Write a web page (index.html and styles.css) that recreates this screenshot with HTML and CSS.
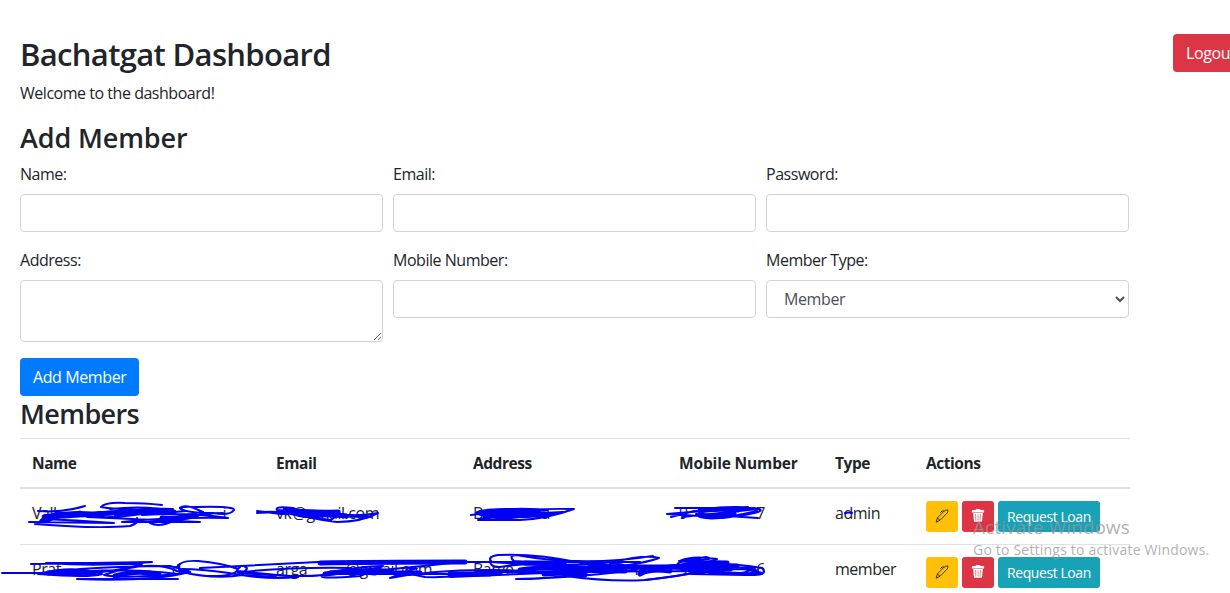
FILE: index.html
```html
<!DOCTYPE html>
<html lang="en">
<head>
<meta charset="utf-8">
<title>Bachatgat Dashboard</title>
<link rel="stylesheet" href="styles.css">
</head>
<body>
<svg class="sprite" aria-hidden="true">
  <symbol id="pencil" viewBox="0 0 16 16"><path d="M1.300 15 2.800 10.200 10.500 2.300Q12 .8 14.800 1.200 15 3.500 13.500 5L5.800 12.900ZM2.800 10.200 5.800 12.900M10.500 2.300H8L6 4.300" fill="none" stroke="currentColor" stroke-width="1" stroke-linejoin="round"/></symbol>
  <symbol id="trash" viewBox="0 0 14 16"><path fill="currentColor" fill-rule="evenodd" d="M5 0h4l1 1h3q1 0 1 1v2H0V2q0-1 1-1h3zM1.500 4.500h11l-.8 9q-.1 1-1.200 1h-7q-1.100 0-1.200-1zM4 6l.3 7h.7l-.3-7zm2.700 0v7h.7V6zm2.600 0-.3 7h.7l.3-7z"/></symbol>
</svg>
<main class="page">
  <header class="top">
    <div>
      <h1 class="title">Bachatgat Dashboard</h1>
      <p class="welcome">Welcome to the dashboard!</p>
    </div>
    <button class="btn danger logout">Logout</button>
  </header>
  <h2 class="heading add-heading">Add Member</h2>
  <form class="form">
    <div class="grid">
      <div class="field"><label class="label">Name:</label><input class="control"></div>
      <div class="field"><label class="label">Email:</label><input class="control"></div>
      <div class="field"><label class="label">Password:</label><input class="control" type="password"></div>
      <div class="field"><label class="label">Address:</label><textarea class="control area"></textarea></div>
      <div class="field"><label class="label">Mobile Number:</label><input class="control"></div>
      <div class="field"><label class="label">Member Type:</label><select class="control select"><option>Member</option></select></div>
    </div>
    <button class="btn primary" type="button">Add Member</button>
  </form>
  <h2 class="heading members-heading">Members</h2>
  <table class="table">
    <colgroup><col class="c-name"><col class="c-email"><col class="c-address"><col class="c-mobile"><col class="c-type"><col></colgroup>
    <thead><tr><th>Name</th><th>Email</th><th>Address</th><th class="wide">Mobile Number</th><th>Type</th><th>Actions</th></tr></thead>
    <tbody>
      <tr>
        <td><div class="ends w-name"><span>Vall</span><span>i</span></div></td>
        <td><div class="ends w-mail"><span>vk</span><span>@gmail.com</span></div></td>
        <td><div class="ends w-addr"><span>B</span><span>a</span></div></td>
        <td><div class="ends w-phone"><span>9</span><span>7</span></div></td>
        <td>admin</td>
        <td><div class="actions"><button class="btn sm warning"><svg class="icon"><use href="#pencil"/></svg></button><button class="btn sm danger"><svg class="icon"><use href="#trash"/></svg></button><button class="btn sm info">Request Loan</button></div></td>
      </tr>
      <tr>
        <td><div class="ends w-name2"><span>Prat</span><span>d</span></div></td>
        <td><div class="ends w-mail2"><span>arga</span><span>@gmail.com</span></div></td>
        <td><div class="ends w-addr2"><span>Barve</span><span>i</span></div></td>
        <td><div class="ends w-phone"><span>9</span><span>6</span></div></td>
        <td>member</td>
        <td><div class="actions"><button class="btn sm warning"><svg class="icon"><use href="#pencil"/></svg></button><button class="btn sm danger"><svg class="icon"><use href="#trash"/></svg></button><button class="btn sm info">Request Loan</button></div></td>
      </tr>
    </tbody>
  </table>
</main>
<svg class="ink" viewBox="0 0 1230 593" aria-hidden="true">
  <!-- first row -->
  <path d="M38 511Q62 513 85 506M29 522L114 523Q75 520 42 519Q32 527 70 514Q100 507 42 520Q60 518 100 512L48 518Q80 518 120 511M35 524Q95 529 130 526Q141 522 137 518M163 510Q115 510 101 507Q105 502 125 503Q145 503 162 505M110 509Q145 505 175 511L60 516Q150 507 173 509Q120 519 87 517L200 522H122Q170 517 228 518Q190 512 142 515L186 511Q170 506 196 507Q235 506 234 510Q230 516 213 513Q185 513 180 508Q185 503 203 512Q200 518 175 520Q160 528 150 523M184 518Q206 513 223 513"/>
  <path class="heavy" d="M45 517Q75 511 103 515M57 514Q80 516 112 513M116 514Q152 510 174 512M162 518Q180 519 195 515"/>
  <path d="M257 511L281 514Q307 513 293 508Q274 506 277 510L340 515L304 517Q275 509 257 513Q275 512 318 511Q342 513 331 520Q306 517 295 510L335 512Q348 518 378 513Q361 522 337 522Q310 519 288 511Q310 514 335 517Q350 513 371 517L303 516"/>
  <path class="heavy" d="M285 510Q310 513 338 512M310 515Q330 513 346 516"/>
  <path d="M471 515Q520 508 574 509Q546 519 520 520L478 520Q480 516 551 515Q489 521 476 513Q480 507 548 510Q478 517 484 517Q512 514 563 512Q495 521 480 519"/>
  <path class="heavy" d="M480 513Q515 509 538 511M485 515Q510 517 540 514"/>
  <path d="M675 508H715Q753 505 757 511Q715 521 700 516L667 514Q700 511 754 508Q775 511 730 517Q700 521 696 514L758 518M671 517L694 511Q727 510 748 507M682 517L758 509"/>
  <path class="heavy" d="M700 511Q714 508 738 510M700 515Q714 518 734 514"/>
  <path d="M845 513Q849 512 852 513"/>
  <!-- second row -->
  <path d="M2 573H42Q73 565 102 574Q90 578 38 574L80 569Q123 566 170 566Q192 572 190 572Q150 582 77 579H178M31 564L152 562Q100 567 46 563L142 564Q114 573 60 575Q107 566 178 574Q120 579 104 575Q151 559 177 571Q215 580 242 575L276 577M178 567Q180 560 198 561Q222 563 238 569Q235 577 206 576Q175 573 178 565M240 567Q233 573 242 573Q250 568 245 567M182 569Q200 569 229 573Q265 580 298 577Q257 573 237 571M200 568L318 562H640M242 572Q290 567 351 568"/>
  <path class="heavy" d="M48 573Q74 571 94 573M115 576Q140 569 159 575M320 563Q365 562 465 562M325 574Q350 570 375 573"/>
  <path d="M318 562H460Q390 570 330 574H500M240 573Q318 579 330 573Q360 566 383 566L360 576Q310 580 325 574Q380 566 425 577Q456 578 478 572L720 571M450 577L570 572Q637 566 659 558Q646 554 613 562Q570 568 492 562Q486 557 498 555Q535 553 582 563L603 562Q535 563 514 561Q508 556 516 555Q582 567 653 556M491 557Q487 567 500 567Q540 560 600 570Q550 580 516 579Q590 577 638 569Q610 560 609 566L565 576Q610 582 645 580Q681 576 697 572L670 567M410 575Q400 567 417 568L390 578Q460 565 554 573"/>
  <path class="heavy" d="M330 573Q380 568 395 573L420 573M450 574H490M525 563H564M520 570Q545 566 608 569M546 568Q590 571 625 571M544 574Q565 572 585 575M590 566Q640 568 711 566M640 574Q650 568 670 571"/>
  <path d="M640 570Q705 558 762 568Q770 576 745 575L691 574Q750 566 758 571Q735 580 680 566Q668 563 706 557Q720 560 680 561Q691 555 717 559Q700 567 660 566L755 568Q740 577 717 571M679 561Q728 565 763 573Q720 574 690 568M645 580Q680 576 704 571"/>
  <path class="heavy" d="M685 565Q700 562 727 563M670 567Q700 568 737 566M690 570Q715 567 730 569"/>
</svg>
<aside class="watermark"><div class="wm-title">Activate Windows</div><div class="wm-text">Go to Settings to activate Windows.</div></aside>
</body>
</html>
```

FILE: styles.css
```css
* { box-sizing: border-box; }
body { margin: 0; width: 1230px; height: 593px; overflow: hidden; position: relative; background: #fff; color: #212529; font: 400 16px/24px "Open Sans", "Noto Sans", sans-serif; letter-spacing: -.47px; }
.sprite { display: none; }
.page { padding: 35px 0 0 20px; width: 1250px; }
.top { display: flex; justify-content: space-between; align-items: flex-start; }
.title { margin: 0 0 8px; font-size: 31px; line-height: 38px; font-weight: 600; letter-spacing: -.67px; }
.welcome { margin: 0 0 16px; }
.logout { margin-top: -1px; width: 77px; }
.heading { margin: 0 0 8px; font-size: 27px; line-height: 33px; font-weight: 600; letter-spacing: -.6px; }
.add-heading { letter-spacing: -.12px; }
.form { width: 1109px; }
.grid { display: grid; grid-template-columns: repeat(3, 363px); column-gap: 10px; row-gap: 16px; margin-bottom: 16px; }
.field { display: flex; flex-direction: column; }
.label { margin-bottom: 8px; }
.control { display: block; width: 100%; height: 38px; margin: 0; padding: 6px 12px; border: 1px solid #ced4da; border-radius: 4px; background: #fff; color: #495057; font: inherit; letter-spacing: inherit; }
.area { height: 62px; resize: vertical; }
.select { padding-left: 13px; letter-spacing: -.4px; }
.btn { display: block; height: 38px; padding: 6px 12px; border: 1px solid transparent; border-radius: 4px; color: #fff; font: inherit; letter-spacing: -.4px; text-align: left; white-space: nowrap; }
.primary { background: #007bff; width: 119px; }
.danger { background: #dc3545; }
.warning { background: #ffc107; color: #212529; }
.info { background: #17a2b8; width: 102px; }
.members-heading { line-height: 36px; margin-bottom: 6px; }
.table { width: 1110px; table-layout: fixed; border-collapse: separate; border-spacing: 0; }
.c-name { width: 244px; }
.c-email { width: 197px; }
.c-address { width: 206px; }
.c-mobile { width: 156px; }
.c-type { width: 91px; }
.table th { padding: 13px 12px 12px; border-top: 1px solid #dee2e6; border-bottom: 2px solid #dee2e6; text-align: left; font-size: 15.5px; font-weight: 700; height: 51px; line-height: 23px; letter-spacing: -.45px; }
.table .wide { letter-spacing: -.15px; }
.table td { padding: 12px; vertical-align: top; height: 55px; }
.table tr + tr td { border-top: 1px solid #dee2e6; }
.actions { display: flex; gap: 4px; }
.btn.sm { height: 31px; padding: 4px 8px; border-radius: 3px; font-size: 14px; line-height: 21px; min-width: 32px; letter-spacing: -.42px; }
.icon { display: block; width: 14px; height: 14px; margin-top: -1px; }
.ends { display: flex; justify-content: space-between; }
.w-name { width: 194px; }
.w-mail { width: 103px; }
.w-addr { width: 77px; }
.w-phone { width: 86px; }
.w-name2 { width: 149px; }
.w-mail2 { width: 156px; }
.w-addr2 { width: 165px; }
.ink { position: absolute; left: 0; top: 0; width: 1230px; height: 593px; fill: none; stroke: #0000f5; stroke-width: 2; stroke-linecap: round; stroke-linejoin: round; pointer-events: none; }
.heavy { stroke-width: 5; }
.watermark { position: absolute; left: 973px; top: 515px; color: rgba(150, 150, 150, .75); white-space: nowrap; }
.wm-title { font-size: 19px; letter-spacing: .05px; line-height: 25px; }
.wm-text { font-size: 14px; line-height: 20px; letter-spacing: .2px; }
```
